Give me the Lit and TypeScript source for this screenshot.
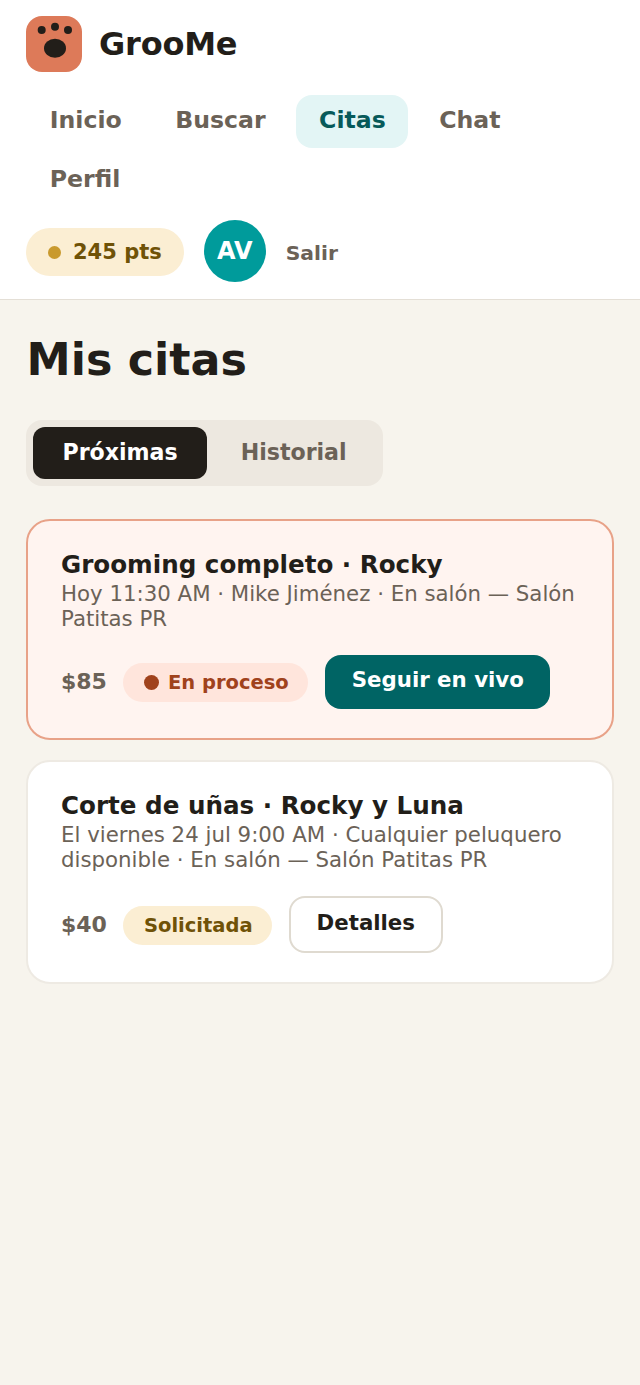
import { LitElement, html, css } from "lit";
import { customElement } from "lit/decorators.js";

@customElement("app-root")
export class AppRoot extends LitElement {
  static styles = css`
    :host { display: block; min-height: 1385px; background: #f7f4ed; font-family: "DejaVu Sans", sans-serif; color: #221e19; }
    header { background: #fff; border-bottom: 1px solid #e4dfd6; padding: 16px 26px 17px; display: flex; flex-direction: column; }
    .brand { display: flex; align-items: center; gap: 17px; }
    .logo { width: 56px; height: 56px; display: block; }
    .name { font-size: 32px; font-weight: 700; letter-spacing: -0.2px; }
    nav { display: flex; flex-wrap: wrap; gap: 6px 8px; margin-top: 23px; padding-left: 1px; }
    nav a { font-size: 23.6px; font-weight: 700; color: #6b6257; padding: 10px 22.75px 12px; line-height: 31px; border-radius: 16px; }
    nav a.on { background: #e3f5f5; color: #075a5a; }
    .user { display: flex; align-items: center; gap: 20px; margin-top: 13px; }
    .pts { display: flex; align-items: center; gap: 12px; background: #fbeed3; color: #6f5207; font-size: 21px; font-weight: 700; height: 48px; padding: 0 22px; border-radius: 24px; margin-top: 2px; }
    .pts i { width: 13px; height: 13px; border-radius: 50%; background: #c99a2e; }
    .av { width: 62px; height: 62px; border-radius: 50%; background: #009b9b; color: #fff; display: flex; align-items: center; justify-content: center; font-size: 24px; font-weight: 700; }
    .out { font-size: 20.3px; font-weight: 700; color: #6b6257; margin-top: 3px; }
    main { padding: 0 26px; }
    h1 { margin: 30px 0 0; padding-left: 0.5px; font-size: 44.4px; line-height: 60px; font-weight: 700; }
    .tabs { display: inline-flex; background: #ede8e0; border-radius: 16px; padding: 7px; margin-top: 30px; gap: 4px; }
    .tabs span { font-size: 22.1px; font-weight: 700; color: #6b6257; height: 50px; display: flex; align-items: center; padding: 0 29.5px 2px; border-radius: 12px; }
    .tabs span.on { background: #221e19; color: #fff; }
    .cards { display: flex; flex-direction: column; gap: 20px; margin-top: 33px; }
    .card { background: #fff; border: 2px solid #eeeae3; border-radius: 24px; padding: 27px 33px 29px; }
    .card.live { background: #fff4f0; border-color: #e8a288; }
    h2 { margin: 0; font-size: 24.6px; line-height: 33px; font-weight: 700; }
    p { margin: 0; font-size: 21.3px; line-height: 25px; color: #6b6257; }
    .row { display: flex; align-items: center; gap: 16px; margin-top: 24px; }
    .price { font-size: 22px; font-weight: 700; color: #6b6257; margin-bottom: 2px; }
    .price.low { margin-bottom: 0; }
    .badge { display: flex; align-items: center; gap: 9px; height: 39px; padding: 0 19.5px 0 21px; border-radius: 20px; font-size: 19.5px; font-weight: 700; margin: 1px 1px 0 0; }
    .badge i { width: 15px; height: 15px; border-radius: 50%; background: currentColor; }
    .badge.proc { background: #ffe5dc; color: #a0421c; }
    .badge.sol { background: #fbeed3; color: #6f5207; }
    .btn { font-size: 21.3px; font-weight: 700; border-radius: 16px; display: flex; align-items: center; }
    .btn.pri { height: 48px; padding: 0 26.5px 6px; background: #006464; color: #fff; }
    .btn.sec { height: 49px; padding: 0 25.5px 4px; background: #fff; border: 2px solid #dfdad0; color: #221e19; }
  `;

  render() {
    return html`
      <header>
        <div class="brand">
          <svg class="logo" viewBox="0 0 56 56">
            <rect width="56" height="56" rx="16" fill="#dd7a59"/>
            <ellipse cx="29" cy="32.300" rx="11" ry="9.500" fill="#221e19"/>
            <circle cx="15.700" cy="14" r="4" fill="#221e19"/>
            <circle cx="29" cy="10.700" r="4" fill="#221e19"/>
            <circle cx="42" cy="14" r="4" fill="#221e19"/>
          </svg>
          <span class="name">GrooMe</span>
        </div>
        <nav>
          <a>Inicio</a><a>Buscar</a><a class="on">Citas</a><a>Chat</a><a>Perfil</a>
        </nav>
        <div class="user">
          <div class="pts"><i></i>245 pts</div>
          <div class="av">AV</div>
          <span class="out">Salir</span>
        </div>
      </header>
      <main>
        <h1>Mis citas</h1>
        <div class="tabs"><span class="on">Próximas</span><span>Historial</span></div>
        <div class="cards">
          <section class="card live">
            <h2>Grooming completo · Rocky</h2>
            <p>Hoy 11:30 AM · Mike Jiménez · En salón — Salón Patitas PR</p>
            <div class="row">
              <span class="price">$85</span>
              <span class="badge proc"><i></i>En proceso</span>
              <span class="btn pri">Seguir en vivo</span>
            </div>
          </section>
          <section class="card">
            <h2>Corte de uñas · Rocky y Luna</h2>
            <p>El viernes 24 jul 9:00 AM · Cualquier peluquero disponible · En salón — Salón Patitas PR</p>
            <div class="row">
              <span class="price low">$40</span>
              <span class="badge sol">Solicitada</span>
              <span class="btn sec">Detalles</span>
            </div>
          </section>
        </div>
      </main>
    `;
  }
}
